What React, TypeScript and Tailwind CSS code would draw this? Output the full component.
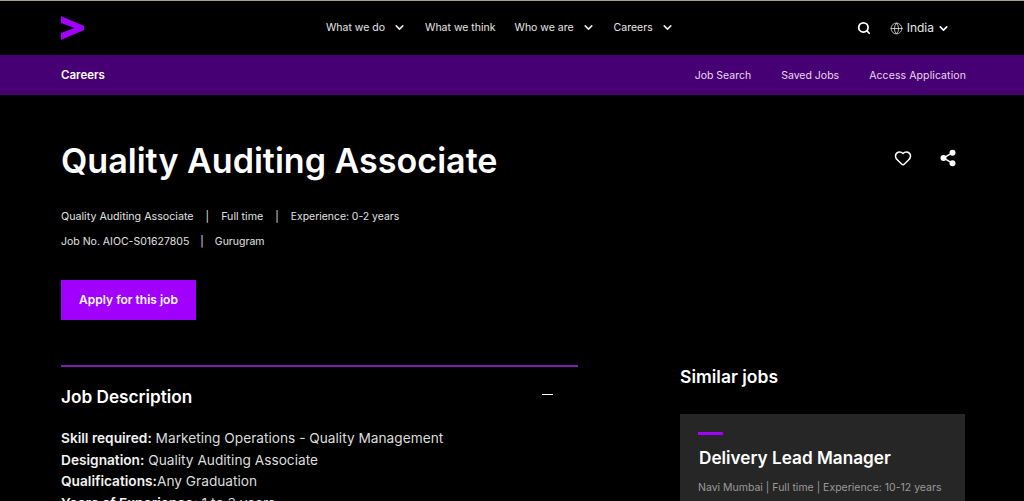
import { Search, Globe, ChevronDown, Heart, Share2 } from "lucide-react";

const navItems = [
  { label: "What we do", chevron: true },
  { label: "What we think", chevron: false },
  { label: "Who we are", chevron: true },
  { label: "Careers", chevron: true },
];

export default function App() {
  return (
    <div className="h-[501px] overflow-hidden bg-black text-white font-['Inter',sans-serif]">
      {/* Top nav */}
      <header className="h-[55px] border-t border-[#a89f8f] flex items-center pl-[61px] pr-[74px]">
        <svg width="23" height="24" viewBox="0 0 23 24" className="mb-[1px]">
          <path d="M0 0 L23 10 L23 14 L0 24 L0 17 L13.5 12 L0 7 Z" fill="#a100ff" />
        </svg>
        <nav className="ml-[242px] mb-[1px] flex items-center gap-[19px] text-[10.5px] text-[#e6e6e6]">
          {navItems.map((item) => (
            <div key={item.label} className="flex items-center gap-[8px]">
              <span>{item.label}</span>
              {item.chevron && <ChevronDown className="w-[13px] h-[13px]" strokeWidth={3} />}
            </div>
          ))}
        </nav>
        <div className="ml-auto flex items-center">
          <Search className="w-[14px] h-[14px] mr-[19px]" strokeWidth={3} />
          <Globe className="w-[13px] h-[13px] mr-[4px] text-[#dddddd]" strokeWidth={1.5} />
          <span className="text-[12px] text-[#e6e6e6]">India</span>
          <ChevronDown className="w-[13px] h-[13px] ml-[3px]" strokeWidth={3} />
        </div>
      </header>

      {/* Careers bar */}
      <div className="h-[40px] pt-[1px] bg-[#460073] flex items-center justify-between pl-[61px] pr-[58px]">
        <span className="font-semibold text-[11.5px]">Careers</span>
        <div className="flex gap-[30px] text-[10.5px] text-[#e6d9ee]">
          <span>Job Search</span>
          <span>Saved Jobs</span>
          <span className="tracking-[0.1px]">Access Application</span>
        </div>
      </div>

      <main className="flex pl-[61px] pr-[59px]">
        <div className="w-[517px]">
          <h1 className="mt-[44px] text-[34.1px] leading-[44px] font-semibold whitespace-nowrap">Quality Auditing Associate</h1>
          <div className="mt-[26px] flex gap-[12px] text-[10.7px] leading-[16px] text-[#e0e0e0]">
            <span>Quality Auditing Associate</span>
            <span>|</span>
            <span>Full time</span>
            <span>|</span>
            <span className="text-[10.4px]">Experience: 0-2 years</span>
          </div>
          <div className="mt-[9px] flex gap-[11px] text-[10.5px] leading-[16px] text-[#e0e0e0]">
            <span>Job No. AIOC-S01627805</span>
            <span>|</span>
            <span>Gurugram</span>
          </div>
          <button className="mt-[30px] block h-[40px] w-[135px] bg-[#a100ff] text-[12px] font-semibold">
            Apply for this job
          </button>

          <section className="mt-[45px] border-t-2 border-[#7a1fb0]">
            <div className="mt-[17px] flex items-center justify-between pr-[25px]">
              <h2 className="text-[17.2px] leading-[26px] font-semibold">Job Description</h2>
              <div className="w-[11px] h-[1.5px] bg-white mb-[5px]" />
            </div>
            <div className="mt-[18px] text-[13.7px] leading-[21.5px] text-[#dddddd]">
              <p><b className="font-semibold text-[#f2f2f2]">Skill required:</b> Marketing Operations - Quality Management</p>
              <p><b className="font-semibold text-[#f2f2f2]">Designation:</b> Quality Auditing Associate</p>
              <p><b className="font-semibold text-[#f2f2f2]">Qualifications:</b>Any Graduation</p>
              <p><b className="font-semibold text-[#f2f2f2]">Years of Experience:</b> 1 to 3 years</p>
            </div>
          </section>
        </div>

        <aside className="ml-[102px] flex-1">
          <div className="mt-[54px] flex justify-end gap-[27px] pr-[8px]">
            <Heart className="w-[18px] h-[18px]" strokeWidth={2} />
            <Share2 className="w-[18px] h-[18px] fill-white" strokeWidth={2} />
          </div>
          <h2 className="mt-[197px] text-[17.5px] leading-[26px] font-semibold">Similar jobs</h2>
          <div className="mt-[24px] h-[120px] bg-[#262626] px-[18px] pt-[18px]">
            <div className="w-[25px] h-[3px] bg-[#a100ff]" />
            <h3 className="mt-[10px] pl-[1px] text-[17.2px] leading-[26px] font-semibold">Delivery Lead Manager</h3>
            <p className="mt-[9px] text-[10.5px] leading-[16px] text-[#9a9a9a]">Navi Mumbai | Full time | Experience: 10-12 years</p>
          </div>
        </aside>
      </main>
    </div>
  );
}
